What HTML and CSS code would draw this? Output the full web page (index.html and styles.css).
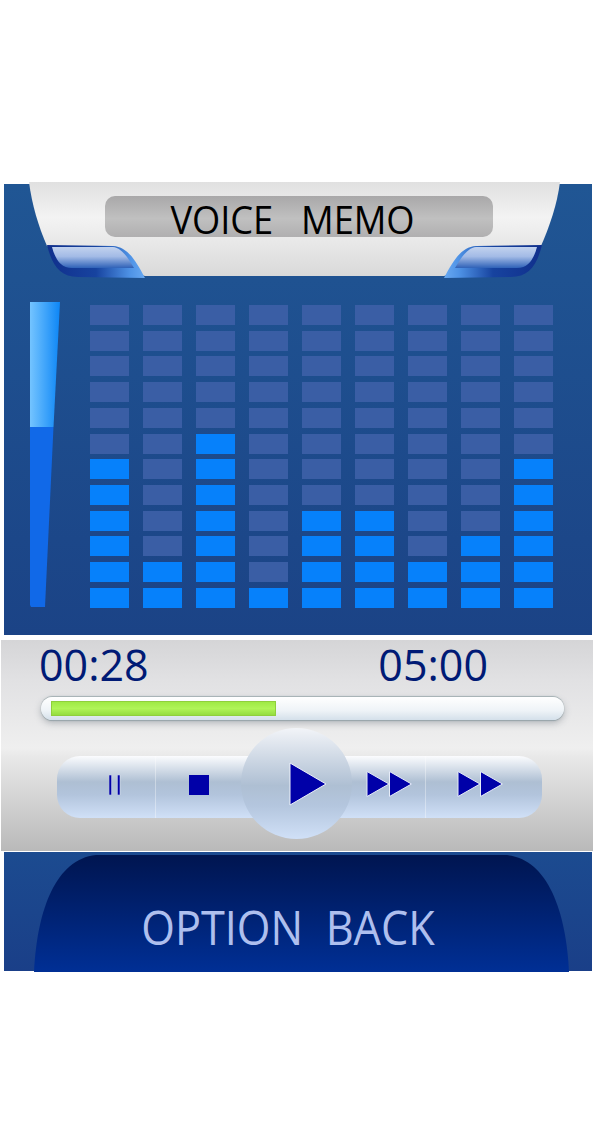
FILE: index.html
```html
<!DOCTYPE html>
<html lang="en">
<head>
<meta charset="utf-8">
<title>Voice Memo</title>
<link rel="stylesheet" href="styles.css">
</head>
<body>
<main class="app">
  <section class="display">
    <header class="head">
      <svg class="sheet" viewBox="0 182 600 100" width="600" height="100" aria-hidden="true">
        <defs>
          <linearGradient id="sheetFill" x1="0" y1="0" x2="0" y2="1">
            <stop offset="0" stop-color="#e0e0e0"/><stop offset=".38" stop-color="#f3f3f3"/><stop offset="1" stop-color="#d9d9d9"/>
          </linearGradient>
          <linearGradient id="tabOuter" x1="0" y1="0" x2="1" y2="0">
            <stop offset="0" stop-color="#102f8c"/><stop offset=".5" stop-color="#17439f"/><stop offset=".85" stop-color="#4f93e6"/><stop offset="1" stop-color="#68a9f2"/>
          </linearGradient>
          <linearGradient id="tabInner" x1="0" y1="0" x2="0" y2="1">
            <stop offset="0" stop-color="#c2d2ee"/><stop offset=".45" stop-color="#a3bbe6"/><stop offset="1" stop-color="#2f62b8"/>
          </linearGradient>
          <g id="tab">
            <path d="M47 245 L113 246 C128 247 136 261 145 278 L78 277 C60 277 52 265 47 245Z" fill="url(#tabOuter)"/>
            <path d="M52 247 L113 247 C122 248 128 258 134 268 L72 268 C60 268 55 258 52 247Z" fill="url(#tabInner)"/>
          </g>
        </defs>
        <path d="M29 182 H560 C557 205 550 225 541 246 L444 276 H145 L47 246 C38 225 32 205 29 182Z" fill="url(#sheetFill)"/>
        <use href="#tab"/>
        <use href="#tab" transform="matrix(-1 0 0 1 589 0)"/>
      </svg>
      <h1 class="title"><span class="title-text">VOICE   MEMO</span></h1>
    </header>
    <div class="levels">
      <svg class="meter" viewBox="0 0 30 306" width="30" height="306" aria-hidden="true">
        <defs>
          <linearGradient id="meterTop" x1="0" y1="0" x2="1" y2="0">
            <stop offset="0" stop-color="#74c4ff"/><stop offset="1" stop-color="#0d86f6"/>
          </linearGradient>
        </defs>
        <polygon points="0,0 30,0 23.5,125 0,125" fill="url(#meterTop)"/>
        <polygon points="0,125 23.5,125 15,305 1,305 0,303" fill="#1169e8"/>
      </svg>
      <div class="bars">
        <div class="col"><i></i><i></i><i></i><i></i><i></i><i></i><i class="on"></i><i class="on"></i><i class="on"></i><i class="on"></i><i class="on"></i><i class="on"></i></div>
        <div class="col"><i></i><i></i><i></i><i></i><i></i><i></i><i></i><i></i><i></i><i></i><i class="on"></i><i class="on"></i></div>
        <div class="col"><i></i><i></i><i></i><i></i><i></i><i class="on"></i><i class="on"></i><i class="on"></i><i class="on"></i><i class="on"></i><i class="on"></i><i class="on"></i></div>
        <div class="col"><i></i><i></i><i></i><i></i><i></i><i></i><i></i><i></i><i></i><i></i><i></i><i class="on"></i></div>
        <div class="col"><i></i><i></i><i></i><i></i><i></i><i></i><i></i><i></i><i class="on"></i><i class="on"></i><i class="on"></i><i class="on"></i></div>
        <div class="col"><i></i><i></i><i></i><i></i><i></i><i></i><i></i><i></i><i class="on"></i><i class="on"></i><i class="on"></i><i class="on"></i></div>
        <div class="col"><i></i><i></i><i></i><i></i><i></i><i></i><i></i><i></i><i></i><i></i><i class="on"></i><i class="on"></i></div>
        <div class="col"><i></i><i></i><i></i><i></i><i></i><i></i><i></i><i></i><i></i><i class="on"></i><i class="on"></i><i class="on"></i></div>
        <div class="col"><i></i><i></i><i></i><i></i><i></i><i></i><i class="on"></i><i class="on"></i><i class="on"></i><i class="on"></i><i class="on"></i><i class="on"></i></div>
      </div>
    </div>
  </section>

  <section class="player">
    <div class="times"><span>00:28</span><span>05:00</span></div>
    <div class="track"><div class="fill"></div></div>
    <div class="controls">
      <button class="btn btn-pause" aria-label="Pause">
        <svg viewBox="0 0 12 20" width="12" height="20"><path d="M0 0h2.6v20H0zM8.4 0H11v20H8.4z" fill="#0000a8" stroke="#e4eaf6" stroke-width=".5"/></svg>
      </button>
      <button class="btn btn-stop" aria-label="Stop">
        <svg viewBox="0 0 20 20" width="20" height="20"><rect width="20" height="20" fill="#0000a8"/></svg>
      </button>
      <button class="btn btn-prev" aria-label="Rewind">
        <svg viewBox="0 0 46 28" width="46" height="28"><path d="M1 1.5 23 14 1 26.5Z M23.5 1.5 45.5 14 23.5 26.5Z" fill="#0000a8" stroke="#e6ecf8" stroke-width="1"/></svg>
      </button>
      <button class="btn btn-next" aria-label="Fast forward">
        <svg viewBox="0 0 46 28" width="46" height="28"><path d="M1 1.5 23 14 1 26.5Z M23.5 1.5 45.5 14 23.5 26.5Z" fill="#0000a8" stroke="#e6ecf8" stroke-width="1"/></svg>
      </button>
      <button class="play" aria-label="Play">
        <svg viewBox="0 0 38 44" width="38" height="44"><path d="M1 1 37 22 1 43Z" fill="#0000a8" stroke="#eef2fa" stroke-width="1"/></svg>
      </button>
    </div>
  </section>

  <footer class="foot">
    <svg class="arch" viewBox="0 0 536 117" width="535" height="117" aria-hidden="true">
      <defs>
        <linearGradient id="archFill" x1="0" y1="0" x2="0" y2="1">
          <stop offset="0" stop-color="#001550"/><stop offset="1" stop-color="#002f95"/>
        </linearGradient>
      </defs>
      <path d="M0 117 C3 55 22 4 62 0 H474 C514 4 533 55 536 117Z" fill="url(#archFill)"/>
    </svg>
    <p class="options">OPTION  BACK</p>
  </footer>
</main>
</body>
</html>
```

FILE: styles.css
```css
* { box-sizing: border-box; }

html, body { margin: 0; background: #fff; }

body {
  width: 600px;
  height: 1132px;
  overflow: hidden;
  font-family: "Open Sans", "Noto Sans", sans-serif;
}

.app { padding-top: 184px; }

.display {
  width: 588px;
  height: 451px;
  margin-left: 4px;
  background: linear-gradient(#205694, #1b4386);
}

.head {
  position: relative;
  height: 92px;
  padding: 12px 0 0 101px;
}

.sheet {
  position: absolute;
  left: -4px;
  top: -2px;
}

.title {
  position: relative;
  width: 388px;
  height: 41px;
  margin: 0;
  padding-right: 13px;
  border-radius: 10px;
  background: linear-gradient(#a9a8a9, #c0c0c0 55%, #b0afb0);
  color: #000;
  font-size: 36.3px;
  font-weight: 400;
  letter-spacing: -.1px;
  line-height: 46px;
  text-align: center;
  white-space: pre;
}

.title-text {
  display: block;
  transform: scaleY(1.08);
}

.levels {
  display: flex;
  padding: 26px 0 0 26px;
}

.meter { flex: none; }

.bars {
  display: flex;
  gap: 14px;
  margin: 3px 0 0 30px;
}

.col {
  display: flex;
  flex-direction: column;
  gap: 5.73px;
  width: 39px;
}

.col i {
  display: block;
  height: 20px;
  background: #3a5ea5;
}

.col i.on { background: #0681fb; }

.player {
  width: 592px;
  height: 211px;
  margin: 5px 0 0 1px;
  padding-top: 1px;
  background: linear-gradient(#d5d5d7 0, #e1e1e3 40px, #efefef 108px, #e9e9e9 116px, #b9b9b9 100%);
}

.times {
  display: flex;
  justify-content: space-between;
  width: 449px;
  margin-left: 38px;
  color: #001a75;
  font-size: 43px;
  line-height: 48px;
}

.track {
  width: 523px;
  height: 23px;
  margin: 8px 0 0 40px;
  padding: 4px 0 0 10px;
  border-radius: 12px;
  background: linear-gradient(#ffffff, #eef3f7 60%, #d4e0ea);
  box-shadow: 0 -1px 1px #a3b0b3, 0 1px 1px #97a5aa, 0 3px 7px rgba(90, 100, 110, .4);
}

.fill {
  width: 225px;
  height: 15px;
  border: 1px solid #8fcf3c;
  background: linear-gradient(#9fea45, #b0f458 50%, #94dd3f);
}

.controls {
  position: relative;
  display: flex;
  width: 485px;
  height: 62px;
  margin: 36px 0 0 56px;
  border-radius: 23px;
  background: linear-gradient(#fbfcfe 0, #aebfd3 42%, #b2c4dc 62%, #d0e0f7 100%);
}

.btn {
  display: flex;
  align-items: center;
  justify-content: center;
  height: 62px;
  padding: 0;
  border: 0;
  background: none;
}

.btn-pause { width: 99px; padding-left: 17px; border-right: 1px solid rgba(255, 255, 255, .35); }
.btn-pause svg { margin-bottom: 4px; }
.btn-stop { width: 85px; }
.btn-stop svg { margin-bottom: 5px; }
.btn-prev { width: 185px; padding-left: 112px; border-right: 1px solid rgba(255, 255, 255, .35); }
.btn-prev svg { flex: none; margin-bottom: 7px; }
.btn-next { width: 116px; padding-right: 9px; }
.btn-next svg { margin-bottom: 7px; }

.play {
  position: absolute;
  left: 184px;
  top: -28px;
  display: flex;
  align-items: center;
  justify-content: center;
  width: 111px;
  height: 111px;
  padding: 0 0 0 22px;
  border: 0;
  border-radius: 50%;
  background: linear-gradient(#f2f4f8 0, #aebfd3 52%, #b4c6de 70%, #d0e0f7 100%);
}

.foot {
  position: relative;
  width: 588px;
  height: 119px;
  margin: 1px 0 0 4px;
  padding-top: 3px;
  background: linear-gradient(#1c4b90, #1a3f88);
}

.arch {
  display: block;
  margin-left: 30px;
}

.options {
  position: absolute;
  left: 0;
  right: 0;
  top: 49px;
  margin: 0;
  padding-right: 20px;
  color: #aebfee;
  font-size: 43.3px;
  font-weight: 400;
  line-height: 54px;
  text-align: center;
  white-space: pre;
  transform: scaleY(1.08);
}
```
